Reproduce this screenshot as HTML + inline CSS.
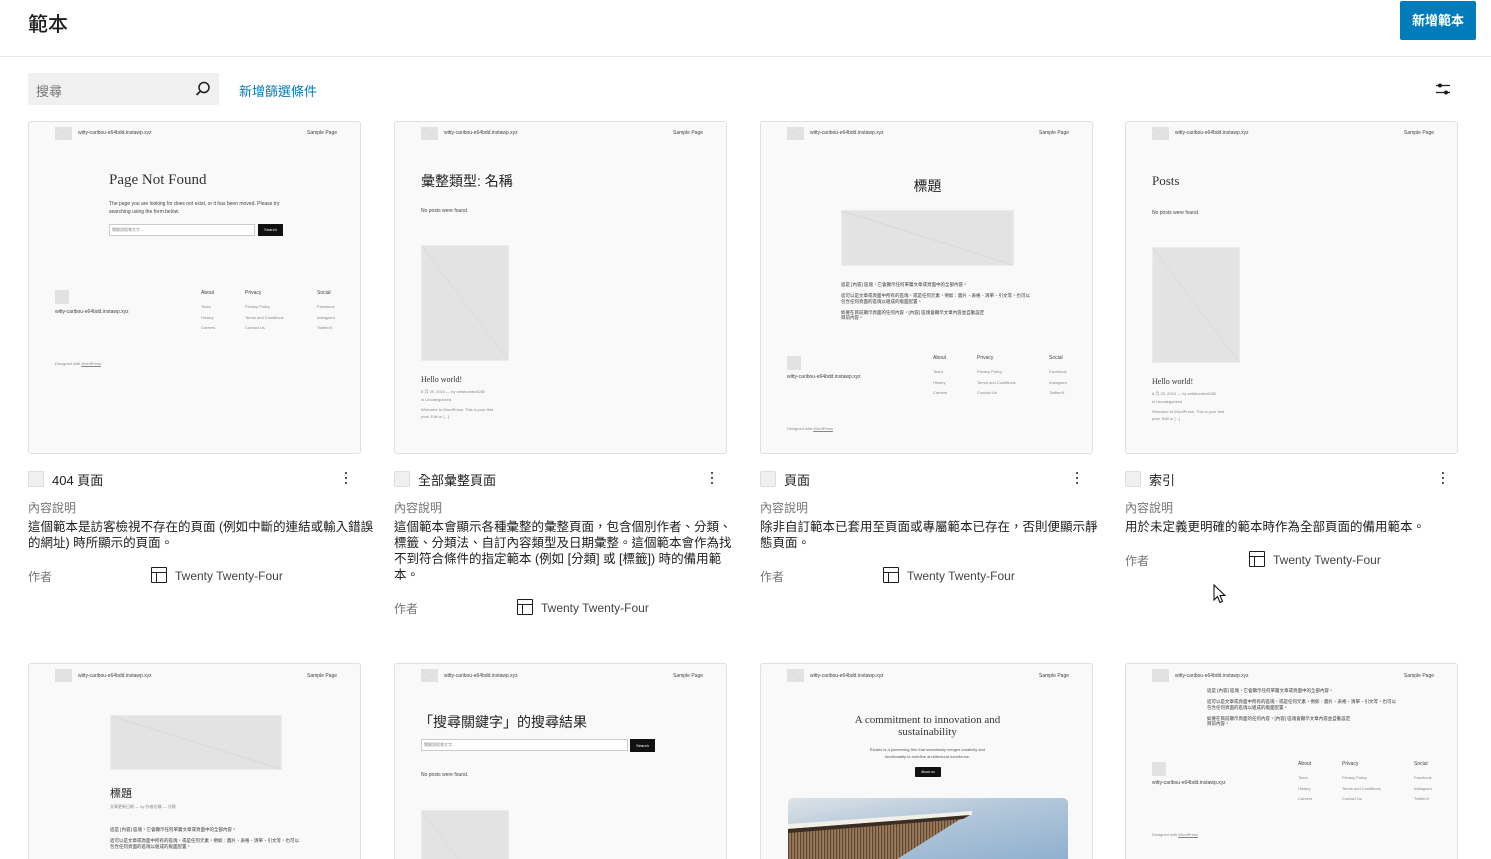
<!DOCTYPE html>
<html><head><meta charset="utf-8">
<style>
*{box-sizing:border-box;margin:0;padding:0}
html,body{width:1491px;height:859px;overflow:hidden}
body{background:#fff;font-family:"Liberation Sans","Noto Sans CJK TC",sans-serif;color:#1e1e1e;position:relative}
.a{position:absolute;white-space:nowrap}
.pv{position:absolute;width:333px;height:333px;background:#f9f9f9;border:1px solid #e0e0e0;border-radius:3px;overflow:hidden}
.r2{height:196px;border-bottom:none;border-radius:3px 3px 0 0}
.lg{position:absolute;width:17px;height:13px;background:linear-gradient(to top right,#e2e2e2 48%,#d6d6d6 50%,#e2e2e2 52%)}
.t5{font-size:5px;color:#444}
.t4{font-size:4px;color:#888}
.img{position:absolute;background:#e3e3e3;border:1px solid #ececec}
.ser{font-family:"Liberation Serif","Noto Serif CJK SC",serif;color:#333}
.cb{position:absolute;width:16px;height:16px;background:#f0f0f0;border:1px solid #ddd;border-radius:2px}
.tt{font-size:13px;color:#1e1e1e}
.lab{font-size:12px;color:#757575}
.desc{position:absolute;font-size:12.5px;line-height:16px;color:#1e1e1e;width:346px}
.kb{position:absolute;width:3px}
.kb i{display:block;width:2px;height:2px;background:#1e1e1e;margin-bottom:3px;border-radius:1px}
.ic{position:absolute;width:16px;height:16px;border:1.5px solid #1e1e1e;border-radius:1px}
.ic:before{content:"";position:absolute;left:0;right:0;top:3.5px;border-top:1.5px solid #1e1e1e}
.ic:after{content:"";position:absolute;left:3.5px;top:4px;bottom:0;border-left:1.5px solid #1e1e1e}
.auth{font-size:12px;color:#444}
</style></head><body>

<div class="a" style="left:28px;top:8px;font-size:20px;font-weight:500">範本</div>
<div class="a" style="left:1400px;top:1px;width:76px;height:39px;background:#007cba;border-radius:2px;color:#fff;font-size:13px;font-weight:bold;text-align:center;line-height:39px">新增範本</div>
<div class="a" style="left:0;top:56px;width:1491px;height:1px;background:#e8e8e8"></div>

<div class="a" style="left:28px;top:73px;width:191px;height:32px;background:#f0f0f0;border-radius:2px"></div>
<div class="a" style="left:36px;top:81px;font-size:13px;color:#757575">搜尋</div>
<svg class="a" style="left:194px;top:80px" width="18" height="18" viewBox="0 0 18 18"><circle cx="10" cy="7.5" r="5" fill="none" stroke="#1e1e1e" stroke-width="1.5"/><path d="M6.5 11 L2.5 15" stroke="#1e1e1e" stroke-width="1.6"/></svg>
<div class="a" style="left:239px;top:81px;font-size:13px;color:#007cba">新增篩選條件</div>
<svg class="a" style="left:1434px;top:80px" width="18" height="18" viewBox="0 0 18 18"><path d="M2 5.5H16M2 12.5H16" stroke="#1e1e1e" stroke-width="1.3"/><circle cx="6" cy="5.5" r="2" fill="#1e1e1e"/><circle cx="12" cy="12.5" r="2" fill="#1e1e1e"/></svg>

<!-- Card 1 -->
<div class="pv" style="left:28px;top:121px">
 <div class="lg" style="left:26px;top:5px"></div>
 <div class="a t5" style="left:49px;top:8px">witty-caribou-e64bdd.instawp.xyz</div>
 <div class="a t5" style="left:278px;top:8px">Sample Page</div>
 <div class="a ser" style="left:80px;top:50px;font-size:15px">Page Not Found</div>
 <div class="a t5" style="left:80px;top:78px;line-height:8px">The page you are looking for does not exist, or it has been moved. Please try<br>searching using the form below.</div>
 <div class="a" style="left:80px;top:102px;width:146px;height:12px;background:#fff;border:1px solid #ccc"></div>
 <div class="a t4" style="left:83px;top:105px">關鍵詞搜尋文字...</div>
 <div class="a" style="left:229px;top:102px;width:25px;height:12px;background:#111;color:#fff;font-size:4px;text-align:center;line-height:12px">Search</div>
 <div class="lg" style="left:26px;top:168px;height:14px;width:14px"></div>
 <div class="a t5" style="left:26px;top:187px">witty-caribou-e64bdd.instawp.xyz</div>
 <div class="a t5" style="left:172px;top:168px">About</div><div class="a t4" style="left:172px;top:180px;line-height:10.5px">Team<br>History<br>Careers</div>
 <div class="a t5" style="left:216px;top:168px">Privacy</div><div class="a t4" style="left:216px;top:180px;line-height:10.5px">Privacy Policy<br>Terms and Conditions<br>Contact Us</div>
 <div class="a t5" style="left:288px;top:168px">Social</div><div class="a t4" style="left:288px;top:180px;line-height:10.5px">Facebook<br>Instagram<br>Twitter/X</div>
 <div class="a t4" style="left:26px;top:239px">Designed with <u>WordPress</u></div>
</div>

<!-- Card 2 -->
<div class="pv" style="left:394px;top:121px">
 <div class="lg" style="left:26px;top:5px"></div>
 <div class="a t5" style="left:49px;top:8px">witty-caribou-e64bdd.instawp.xyz</div>
 <div class="a t5" style="left:278px;top:8px">Sample Page</div>
 <div class="a" style="left:26px;top:49px;font-size:14px;color:#222">彙整類型: 名稱</div>
 <div class="a t5" style="left:26px;top:86px">No posts were found.</div>
 <div class="img" style="left:26px;top:123px;width:88px;height:116px;background:linear-gradient(to top right,#e3e3e3 49.5%,#d8d8d8 50%,#e3e3e3 50.5%)"></div>
 <div class="a ser" style="left:26px;top:253px;font-size:8px">Hello world!</div>
 <div class="a t4" style="left:26px;top:266px;line-height:8px">8 月 29, 2024 — by zefabombo6280<br>in Uncategorized</div>
 <div class="a t4" style="left:26px;top:284px;line-height:7px">Welcome to WordPress. This is your first<br>post. Edit or [...]</div>
</div>

<!-- Card 3 -->
<div class="pv" style="left:760px;top:121px">
 <div class="lg" style="left:26px;top:5px"></div>
 <div class="a t5" style="left:49px;top:8px">witty-caribou-e64bdd.instawp.xyz</div>
 <div class="a t5" style="left:278px;top:8px">Sample Page</div>
 <div class="a" style="left:0;width:333px;text-align:center;top:54px;font-size:14px;color:#222">標題</div>
 <div class="img" style="left:80px;top:88px;width:173px;height:56px;background:linear-gradient(to top right,#e3e3e3 49%,#d8d8d8 50%,#e3e3e3 51%)"></div>
 <div class="a t4" style="left:80px;top:160px;color:#333;line-height:5.5px;font-size:4.5px">這是 [內容] 區塊，它會顯示任何單篇文章或頁面中的全部內容。<br><br>這可以是文章或頁面中所有的區塊，或是任何元素，例如：圖片、表格、清單、引文等，也可以<br>包含任何頁面的區塊以組成的版面配置。<br><br>如要在目前顯示頁面的任何內容，[內容] 區塊會顯示文章內容並自動設定<br>目前內容。</div>
 <div class="lg" style="left:26px;top:234px;width:14px;height:14px"></div>
 <div class="a t5" style="left:26px;top:252px">witty-caribou-e64bdd.instawp.xyz</div>
 <div class="a t5" style="left:172px;top:233px">About</div><div class="a t4" style="left:172px;top:245px;line-height:10.5px">Team<br>History<br>Careers</div>
 <div class="a t5" style="left:216px;top:233px">Privacy</div><div class="a t4" style="left:216px;top:245px;line-height:10.5px">Privacy Policy<br>Terms and Conditions<br>Contact Us</div>
 <div class="a t5" style="left:288px;top:233px">Social</div><div class="a t4" style="left:288px;top:245px;line-height:10.5px">Facebook<br>Instagram<br>Twitter/X</div>
 <div class="a t4" style="left:26px;top:304px">Designed with <u>WordPress</u></div>
</div>

<!-- Card 4 -->
<div class="pv" style="left:1125px;top:121px">
 <div class="lg" style="left:26px;top:5px"></div>
 <div class="a t5" style="left:49px;top:8px">witty-caribou-e64bdd.instawp.xyz</div>
 <div class="a t5" style="left:278px;top:8px">Sample Page</div>
 <div class="a ser" style="left:26px;top:51px;font-size:13px">Posts</div>
 <div class="a t5" style="left:26px;top:88px">No posts were found.</div>
 <div class="img" style="left:26px;top:125px;width:88px;height:116px;background:linear-gradient(to top right,#e3e3e3 49.5%,#d8d8d8 50%,#e3e3e3 50.5%)"></div>
 <div class="a ser" style="left:26px;top:255px;font-size:8px">Hello world!</div>
 <div class="a t4" style="left:26px;top:268px;line-height:8px">8 月 29, 2024 — by zefabombo6280<br>in Uncategorized</div>
 <div class="a t4" style="left:26px;top:286px;line-height:7px">Welcome to WordPress. This is your first<br>post. Edit or [...]</div>
</div>

<!-- meta row 1 -->
<div class="cb" style="left:28px;top:471px"></div><div class="a tt" style="left:52px;top:470px">404 頁面</div>
<div class="kb" style="left:345px;top:472px"><i></i><i></i><i></i></div>
<div class="a lab" style="left:28px;top:499px">內容說明</div>
<div class="desc" style="left:28px;top:519px">這個範本是訪客檢視不存在的頁面 (例如中斷的連結或輸入錯誤的網址) 時所顯示的頁面。</div>
<div class="a lab" style="left:28px;top:568px">作者</div>
<div class="ic" style="left:151px;top:567px"></div><div class="a auth" style="left:175px;top:569px">Twenty Twenty-Four</div>

<div class="cb" style="left:394px;top:471px"></div><div class="a tt" style="left:418px;top:470px">全部彙整頁面</div>
<div class="kb" style="left:711px;top:472px"><i></i><i></i><i></i></div>
<div class="a lab" style="left:394px;top:499px">內容說明</div>
<div class="desc" style="left:394px;top:519px">這個範本會顯示各種彙整的彙整頁面，包含個別作者、分類、標籤、分類法、自訂內容類型及日期彙整。這個範本會作為找不到符合條件的指定範本 (例如 [分類] 或 [標籤]) 時的備用範本。</div>
<div class="a lab" style="left:394px;top:600px">作者</div>
<div class="ic" style="left:517px;top:599px"></div><div class="a auth" style="left:541px;top:601px">Twenty Twenty-Four</div>

<div class="cb" style="left:760px;top:471px"></div><div class="a tt" style="left:784px;top:470px">頁面</div>
<div class="kb" style="left:1076px;top:472px"><i></i><i></i><i></i></div>
<div class="a lab" style="left:760px;top:499px">內容說明</div>
<div class="desc" style="left:760px;top:519px">除非自訂範本已套用至頁面或專屬範本已存在，否則便顯示靜態頁面。</div>
<div class="a lab" style="left:760px;top:568px">作者</div>
<div class="ic" style="left:883px;top:567px"></div><div class="a auth" style="left:907px;top:569px">Twenty Twenty-Four</div>

<div class="cb" style="left:1125px;top:471px"></div><div class="a tt" style="left:1149px;top:470px">索引</div>
<div class="kb" style="left:1442px;top:472px"><i></i><i></i><i></i></div>
<div class="a lab" style="left:1125px;top:499px">內容說明</div>
<div class="desc" style="left:1125px;top:519px">用於未定義更明確的範本時作為全部頁面的備用範本。</div>
<div class="a lab" style="left:1125px;top:552px">作者</div>
<div class="ic" style="left:1249px;top:551px"></div><div class="a auth" style="left:1273px;top:553px">Twenty Twenty-Four</div>
<svg class="a" style="left:1213px;top:584px" width="14" height="20" viewBox="0 0 14 20"><path d="M1 1 L1 16 L4.5 12.5 L7 18.5 L9.5 17.5 L7 11.5 L12 11.5 Z" fill="#fff" stroke="#000" stroke-width="1"/></svg>

<!-- Row 2 -->
<div class="pv r2" style="left:28px;top:663px">
 <div class="lg" style="left:26px;top:5px"></div>
 <div class="a t5" style="left:49px;top:9px">witty-caribou-e64bdd.instawp.xyz</div>
 <div class="a t5" style="left:278px;top:9px">Sample Page</div>
 <div class="img" style="left:81px;top:51px;width:172px;height:55px;background:linear-gradient(to top right,#e3e3e3 49%,#d8d8d8 50%,#e3e3e3 51%)"></div>
 <div class="a" style="left:81px;top:121px;font-size:11px;color:#222">標題</div>
 <div class="a t4" style="left:81px;top:140px">文章更新日期 — by 作者名稱 — 分類</div>
 <div class="a t4" style="left:81px;top:163px;color:#333;line-height:5.5px;font-size:4.5px">這是 [內容] 區塊，它會顯示任何單篇文章或頁面中的全部內容。<br><br>這可以是文章或頁面中所有的區塊，或是任何元素，例如：圖片、表格、清單、引文等，也可以<br>包含任何頁面的區塊以組成的版面配置。</div>
</div>

<div class="pv r2" style="left:394px;top:663px">
 <div class="lg" style="left:26px;top:5px"></div>
 <div class="a t5" style="left:49px;top:9px">witty-caribou-e64bdd.instawp.xyz</div>
 <div class="a t5" style="left:278px;top:9px">Sample Page</div>
 <div class="a" style="left:24px;top:48px;font-size:14px;color:#222">「搜尋關鍵字」的搜尋結果</div>
 <div class="a" style="left:26px;top:75px;width:207px;height:12px;background:#fff;border:1px solid #ccc"></div>
 <div class="a t4" style="left:29px;top:78px">關鍵詞搜尋文字...</div>
 <div class="a" style="left:235px;top:75px;width:25px;height:13px;background:#111;color:#fff;font-size:4px;text-align:center;line-height:13px">Search</div>
 <div class="a t5" style="left:26px;top:108px">No posts were found.</div>
 <div class="img" style="left:26px;top:146px;width:88px;height:116px;background:linear-gradient(to top right,#e3e3e3 49.5%,#d8d8d8 50%,#e3e3e3 50.5%)"></div>
</div>

<div class="pv r2" style="left:760px;top:663px">
 <div class="lg" style="left:26px;top:5px"></div>
 <div class="a t5" style="left:49px;top:9px">witty-caribou-e64bdd.instawp.xyz</div>
 <div class="a t5" style="left:278px;top:9px">Sample Page</div>
 <div class="a ser" style="left:0;width:333px;text-align:center;top:50px;font-size:11px;line-height:12px">A commitment to innovation and<br>sustainability</div>
 <div class="a t4" style="left:0;width:333px;text-align:center;top:82px;line-height:7px;color:#555">Études is a pioneering firm that seamlessly merges creativity and<br>functionality to redefine architectural excellence.</div>
 <div class="a" style="left:154px;top:103px;width:26px;height:10px;background:#111;color:#fff;font-size:3.5px;text-align:center;line-height:10px;border-radius:1px">About us</div>
 <div class="a" style="left:27px;top:134px;width:280px;height:62px;border-radius:5px 5px 0 0;overflow:hidden;background:linear-gradient(170deg,#dde3e8 0%,#b4c8da 40%,#8fb0cf 100%)">
  <svg width="280" height="70" viewBox="0 0 280 70" style="position:absolute;left:0;top:0"><defs><pattern id="sl" width="3" height="10" patternUnits="userSpaceOnUse"><rect width="3" height="10" fill="#9a7a5a"/><rect width="1.2" height="10" fill="#5e4632"/></pattern></defs><polygon points="0,28 182,15 95,70 0,70" fill="url(#sl)"/><polygon points="0,26 184,13 184,17 0,31" fill="#f2eee8"/><polygon points="0,31 182,17 175,21 0,35" fill="#3a2e24"/></svg>
 </div>
</div>

<div class="pv r2" style="left:1125px;top:663px">
 <div class="lg" style="left:26px;top:5px"></div>
 <div class="a t5" style="left:49px;top:9px">witty-caribou-e64bdd.instawp.xyz</div>
 <div class="a t5" style="left:278px;top:9px">Sample Page</div>
 <div class="a t4" style="left:81px;top:24px;color:#333;line-height:5.5px;font-size:4.5px">這是 [內容] 區塊，它會顯示任何單篇文章或頁面中的全部內容。<br><br>這可以是文章或頁面中所有的區塊，或是任何元素，例如：圖片、表格、清單、引文等，也可以<br>包含任何頁面的區塊以組成的版面配置。<br><br>如要在目前顯示頁面的任何內容，[內容] 區塊會顯示文章內容並自動設定<br>目前內容。</div>
 <div class="lg" style="left:26px;top:98px;width:14px;height:14px"></div>
 <div class="a t5" style="left:26px;top:116px">witty-caribou-e64bdd.instawp.xyz</div>
 <div class="a t5" style="left:172px;top:97px">About</div><div class="a t4" style="left:172px;top:109px;line-height:10.5px">Team<br>History<br>Careers</div>
 <div class="a t5" style="left:216px;top:97px">Privacy</div><div class="a t4" style="left:216px;top:109px;line-height:10.5px">Privacy Policy<br>Terms and Conditions<br>Contact Us</div>
 <div class="a t5" style="left:288px;top:97px">Social</div><div class="a t4" style="left:288px;top:109px;line-height:10.5px">Facebook<br>Instagram<br>Twitter/X</div>
 <div class="a t4" style="left:26px;top:168px">Designed with <u>WordPress</u></div>
</div>

</body></html>
